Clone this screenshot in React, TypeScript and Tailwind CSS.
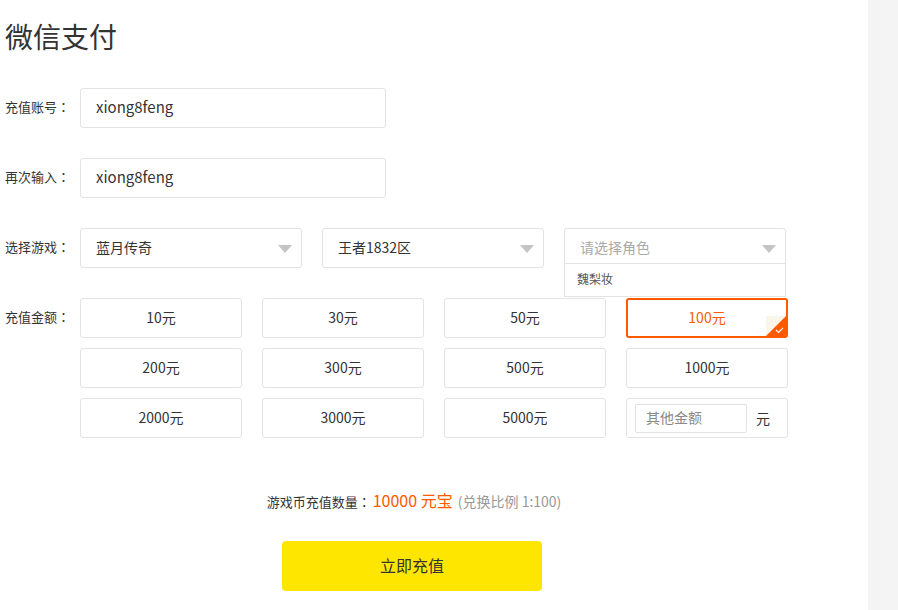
import React from "react";

const font = { fontFamily: "'Noto Sans CJK SC', 'Liberation Sans', sans-serif" };
const tc = { fontFamily: "'Noto Sans CJK TC', sans-serif" };

const amounts = ["10元", "30元", "50元", "100元", "200元", "300元", "500元", "1000元", "2000元", "3000元", "5000元"];

function Caret() {
  return (
    <svg width="14" height="8" viewBox="0 0 14 8" className="absolute right-[9px] top-[16px]">
      <path d="M0 0 L14 0 L7 8 Z" fill="#c4c4c4" />
    </svg>
  );
}

function Colon() {
  return <span style={tc}>：</span>;
}

function Label({ children }: { children: React.ReactNode }) {
  return (
    <div className="w-[75px] shrink-0 text-[13px] leading-[38px] text-[#333]">
      {children}
      <Colon />
    </div>
  );
}

export default function App() {
  return (
    <div className="flex w-[898px] h-[610px] bg-white overflow-hidden" style={font}>
      {/* --- MAIN --- */}
      <div className="w-[868px] pl-[5px]">
        <h1 className="pt-[14px] text-[28px] leading-[44px] text-[#333]">微信支付</h1>

        <div className="mt-[30px] flex">
          <Label>充值账号</Label>
          <div className="w-[306px] h-[40px] border border-[#e3e3e3] rounded-[3px] pl-[15px] text-[15px] leading-[36px] text-[#333]">xiong8feng</div>
        </div>

        <div className="mt-[30px] flex">
          <Label>再次输入</Label>
          <div className="w-[306px] h-[40px] border border-[#e3e3e3] rounded-[3px] pl-[15px] text-[15px] leading-[36px] text-[#333]">xiong8feng</div>
        </div>

        <div className="mt-[30px] flex">
          <Label>选择游戏</Label>
          <div className="flex gap-[20px]">
            <div className="relative w-[222px] h-[40px] border border-[#e3e3e3] rounded-[3px] pl-[15px] text-[14px] leading-[36px] text-[#333]">
              蓝月传奇
              <Caret />
            </div>
            <div className="relative w-[222px] h-[40px] border border-[#e3e3e3] rounded-[3px] pl-[15px] text-[14px] leading-[36px] text-[#333]">
              王者1832区
              <Caret />
            </div>
            <div className="relative w-[222px] h-[40px] border border-[#e3e3e3] rounded-[3px] pl-[15px] text-[14px] leading-[36px] text-[#aaa]">
              请选择角色
              <Caret />
              {/* dropdown */}
              <div className="absolute left-[-1px] top-[34px] w-[222px] h-[34px] bg-white border border-[#e3e3e3] pl-[12px] text-[12px] leading-[30px] text-[#555] z-10">
                魏梨妆
              </div>
            </div>
          </div>
        </div>

        <div className="mt-[30px] flex">
          <Label>充值金额</Label>
          <div className="grid grid-cols-[162px_162px_162px_162px] gap-x-[20px] gap-y-[10px]">
            {amounts.map((a) =>
              a === "100元" ? (
                <div key={a} className="relative h-[40px] border-2 border-[#ff5a00] rounded-[3px] text-center text-[14px] leading-[34px] text-[#ff5a00] overflow-hidden">
                  {a}
                  <svg width="20" height="20" viewBox="0 0 20 20" className="absolute right-0 bottom-0">
                    <path d="M0 0 L20 0 L0 20 Z" fill="#fbf6e9" />
                    <path d="M20 0 L20 20 L0 20 Z" fill="#ff5a00" />
                    <path d="M10 14 L12.5 16.5 L17 12" stroke="#fff" strokeWidth="1.2" fill="none" />
                  </svg>
                </div>
              ) : (
                <div key={a} className="h-[40px] border border-[#e3e3e3] rounded-[3px] text-center text-[14px] leading-[36px] text-[#333]">
                  {a}
                </div>
              )
            )}
            <div className="h-[40px] border border-[#e3e3e3] rounded-[3px] flex items-center pl-[8px] gap-[9px]">
              <div className="w-[112px] h-[29px] border border-[#e3e3e3] rounded-[2px] pl-[10px] text-[14px] leading-[25px] text-[#888]">其他金额</div>
              <span className="text-[14px] leading-[34px] text-[#333]">元</span>
            </div>
          </div>
        </div>

        <div className="mt-[50px] w-[818px] text-center leading-[24px]">
          <span className="text-[13px] text-[#333]">游戏币充值数量<Colon /></span>
          <span className="ml-[2px] text-[16px] text-[#ff5a00]">10000 元宝</span>
          <span className="ml-[2px] text-[14px] text-[#999]"> (兑换比例 1:100)</span>
        </div>

        <div className="mt-[27px] ml-[277px] w-[260px] h-[50px] rounded-[4px] bg-[#ffe600] text-center text-[16px] leading-[48px] text-[#333]">
          立即充值
        </div>
      </div>

      {/* --- SIDE --- */}
      <div className="flex-1 bg-[#f4f4f4]" />
    </div>
  );
}
